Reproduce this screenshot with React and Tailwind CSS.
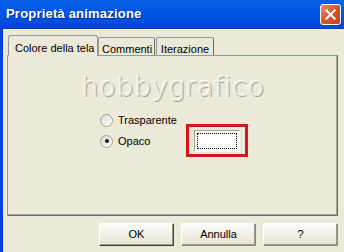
import React from 'react';

const font = { fontFamily: '"Liberation Sans", Arial, sans-serif' };

function Radio({ checked, label }) {
  return (
    <div className="flex items-center gap-[5px] h-[16px]">
      <span className="w-[13px] h-[13px] rounded-full border border-[#a5a198] bg-gradient-to-br from-[#dcd9cc] to-white flex items-center justify-center">
        {checked && <span className="w-[4px] h-[4px] rounded-full bg-[#1c1c1c]" />}
      </span>
      <span className="text-[11px] text-black leading-none">{label}</span>
    </div>
  );
}

function Tab({ label, active, className }) {
  return active ? (
    <div className={`relative z-10 h-[21px] -mb-px px-[6px] pt-[4px] bg-[#ece9d8] border border-b-0 border-[#919b9c] rounded-t-[3px] text-[11px] whitespace-nowrap ${className}`}>
      {label}
    </div>
  ) : (
    <div className={`h-[18px] mt-[3px] px-[3px] pt-[3px] bg-[#ece9d8] border border-b-0 border-[#919b9c] border-r-[#6b6a63] rounded-t-[2px] text-[11px] text-center whitespace-nowrap ${className}`}>
      {label}
    </div>
  );
}

export default function App() {
  return (
    <div className="w-[344px] h-[252px] bg-[#ece9d8] flex flex-col overflow-hidden" style={font}>
      {/* Title bar */}
      <div className="h-[29px] shrink-0 flex items-center justify-between pl-[6px] pr-[3px] bg-gradient-to-b from-[#0a5fe8] via-[#0055e5] to-[#0846d6] border-b border-[#0a3cbc]">
        <span className="text-white font-bold text-[13px] tracking-[0.2px] [text-shadow:1px_1px_0_#0a2a8c]">
          Proprietà animazione
        </span>
        <div className="w-[21px] h-[21px] rounded-[3px] border border-white bg-gradient-to-br from-[#e98d6c] via-[#d9532b] to-[#c3401b] flex items-center justify-center">
          <svg width="11" height="11" viewBox="0 0 11 11">
            <path d="M1.5 1.5 L9.5 9.5 M9.5 1.5 L1.5 9.5" stroke="white" strokeWidth="2.2" strokeLinecap="square" />
          </svg>
        </div>
      </div>

      {/* Body */}
      <div className="flex-1 flex flex-col border-l-[3px] border-[#0841d9] pl-[4px] pr-[6px] pt-[5px]">
        <div className="flex items-end pl-[1px]">
          <Tab label="Colore della tela" active className="w-[90px]" />
          <Tab label="Commenti" className="w-[57px]" />
          <Tab label="Iterazione" className="w-[58px] ml-[1px]" />
        </div>
        <div className="h-[161px] bg-[#ece9d8] border border-[#919b9c] border-r-[#6b6a63] border-b-[#6b6a63] [box-shadow:inset_-1px_-1px_0_#a9a79d] flex flex-col items-center pt-[17px]">
          <div
            className="text-[27px] leading-none text-[#e2decf] tracking-[0.6px] [text-shadow:-1px_-1px_0_#ffffff,1px_1px_0_#aca795] ml-[2px]"
            style={{ fontFamily: '"DejaVu Sans", "Liberation Sans", sans-serif', fontWeight: 200 }}
          >
            hobbygrafico
          </div>
          <div className="flex w-full pl-[92px] pt-[9px] gap-[9px]">
            <div className="flex flex-col gap-[5px] pt-[3px]">
              <Radio label="Trasparente" />
              <Radio label="Opaco" checked />
            </div>
            <div className="mt-[15px] w-[62px] h-[33px] border-[3px] border-[#d6161c] flex items-center justify-center">
              <div className="w-[46px] h-[22px] bg-white border border-[#9d9a8f] border-r-[#ffffff] border-b-[#ffffff] p-[2px]">
                <div className="w-full h-full border border-dotted border-black" />
              </div>
            </div>
          </div>
        </div>

        {/* Buttons */}
        <div className="flex justify-end gap-[7px] pt-[7px]">
          {['OK', 'Annulla', '?'].map((b, i) => (
            <div
              key={b}
              className={`w-[75px] h-[23px] flex items-center justify-center text-[11px] bg-gradient-to-b from-[#fbfbf8] to-[#e6e3d6] border ${i === 0 ? 'border-[#403d35]' : 'border-[#8a877c]'} border-t-white border-l-white rounded-[1px] [box-shadow:inset_-1px_-1px_0_#9d9a8e]`}
            >
              {b}
            </div>
          ))}
        </div>
      </div>
    </div>
  );
}
